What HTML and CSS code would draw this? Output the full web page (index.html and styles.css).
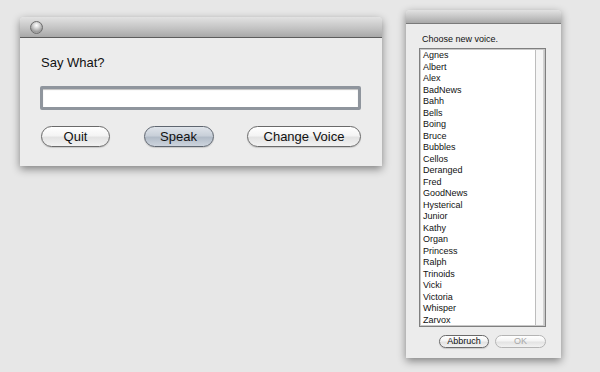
FILE: index.html
```html
<!DOCTYPE html>
<html lang="en">
<head>
  <meta charset="UTF-8">
  <title>Say What?</title>
  <link rel="stylesheet" href="styles.css">
</head>
<body>
  <div class="desktop">
    <div class="window main-window">
      <div class="titlebar">
        <span class="close-btn"></span>
      </div>
      <div class="window-body">
        <div class="label">Say What?</div>
        <input class="text-field" type="text">
        <div class="button-row">
          <button class="pill quit">Quit</button>
          <button class="pill speak default">Speak</button>
          <button class="pill change">Change Voice</button>
        </div>
      </div>
    </div>

    <div class="window voice-window">
      <div class="titlebar small"></div>
      <div class="voice-body">
        <div class="voice-label">Choose new voice.</div>
        <div class="list-box">
          <ul class="voice-list">
            <li>Agnes</li>
            <li>Albert</li>
            <li>Alex</li>
            <li>BadNews</li>
            <li>Bahh</li>
            <li>Bells</li>
            <li>Boing</li>
            <li>Bruce</li>
            <li>Bubbles</li>
            <li>Cellos</li>
            <li>Deranged</li>
            <li>Fred</li>
            <li>GoodNews</li>
            <li>Hysterical</li>
            <li>Junior</li>
            <li>Kathy</li>
            <li>Organ</li>
            <li>Princess</li>
            <li>Ralph</li>
            <li>Trinoids</li>
            <li>Vicki</li>
            <li>Victoria</li>
            <li>Whisper</li>
            <li>Zarvox</li>
          </ul>
          <div class="scroll-track"></div>
        </div>
        <div class="sheet-buttons">
          <button class="pill mini">Abbruch</button>
          <button class="pill mini disabled">OK</button>
        </div>
      </div>
    </div>
  </div>
</body>
</html>
```

FILE: styles.css
```css
body {
  margin: 0;
  background-color: #e7e7e7;
  font-family: "Liberation Sans", Arial, sans-serif;
  color: #111;
}
.desktop {
  position: relative;
  width: 600px;
  height: 372px;
  overflow: hidden;
}
.window {
  position: absolute;
  background-color: #ececec;
  border-radius: 4px 4px 0 0;
  box-shadow: 0 3px 9px rgba(0, 0, 0, 0.45);
  display: flex;
  flex-direction: column;
}
.main-window {
  left: 20px;
  top: 17px;
  width: 362px;
  height: 149px;
}
.voice-window {
  left: 406px;
  top: 10px;
  width: 155px;
  height: 348px;
}
.titlebar {
  height: 20px;
  border-radius: 4px 4px 0 0;
  background: linear-gradient(#e2e2e2, #c4c4c4 55%, #a8a8a8);
  border-bottom: 1px solid #5c5c5c;
  display: flex;
  align-items: center;
  padding-left: 10px;
}
.titlebar.small {
  height: 13px;
  border-bottom-color: #7a7a7a;
}
.close-btn {
  width: 13px;
  height: 13px;
  border-radius: 50%;
  box-sizing: border-box;
  border: 1px solid #6d6d6d;
  background: radial-gradient(circle at 50% 30%, #ffffff 0, #d8d8d8 30%, #9a9a9a 70%, #c8c8c8 100%);
}
.window-body {
  padding: 17px 21px 19px 20px;
  display: flex;
  flex-direction: column;
}
.label {
  font-size: 13px;
  line-height: 16px;
  padding-left: 1px;
}
.text-field {
  margin: 15px 0 0 0;
  height: 24px;
  box-sizing: border-box;
  border: 3px solid #8f959d;
  border-radius: 2px;
  background: #fff;
  box-shadow: inset 0 1px 1px rgba(0, 0, 0, 0.25);
  padding: 0 4px;
  outline: none;
}
.button-row {
  margin-top: 16px;
  padding-left: 1px;
  display: flex;
  justify-content: space-between;
}
.pill {
  height: 21px;
  box-sizing: border-box;
  border: 1px solid #6a6a6a;
  border-radius: 11px;
  background: linear-gradient(#ffffff, #f4f4f4 45%, #e3e3e3 55%, #f2f2f2);
  font-family: "Liberation Sans", Arial, sans-serif;
  font-size: 13px;
  color: #111;
  padding: 0;
  box-shadow: 0 1px 1px rgba(0, 0, 0, 0.15);
}
.quit {
  width: 69px;
}
.speak {
  width: 70px;
}
.change {
  width: 114px;
}
.pill.default {
  background: linear-gradient(#dfe4ea, #c9d0d9 45%, #b2bcc8 55%, #cdd4dd);
  border-color: #5f6670;
}
.voice-body {
  padding: 8px 15px 0 13px;
  display: flex;
  flex-direction: column;
}
.voice-label {
  font-size: 9px;
  line-height: 14px;
  padding-left: 3px;
}
.list-box {
  margin-top: 2px;
  height: 279px;
  box-sizing: border-box;
  border: 1px solid #7f7f7f;
  box-shadow: inset 0 0 0 1px #c9c9c9;
  background: #fff;
  display: flex;
}
.voice-list {
  list-style: none;
  margin: 0;
  padding: 1px 0 0 3px;
  flex: 1;
  font-size: 9px;
  line-height: 11.5px;
}
.scroll-track {
  width: 7px;
  margin: 1px;
  border-left: 1px solid #bdbdbd;
  border-right: 1px solid #d2d2d2;
  background: #f5f5f5;
}
.sheet-buttons {
  margin-top: 8px;
  padding-left: 20px;
  display: flex;
  gap: 6px;
}
.pill.mini {
  height: 13px;
  font-size: 9px;
  line-height: 11px;
  border-radius: 7px;
}
.pill.mini:first-child {
  width: 51px;
}
.pill.mini.disabled {
  width: 52px;
  color: #a8a8a8;
  border-color: #b4b4b4;
  box-shadow: none;
}
```
